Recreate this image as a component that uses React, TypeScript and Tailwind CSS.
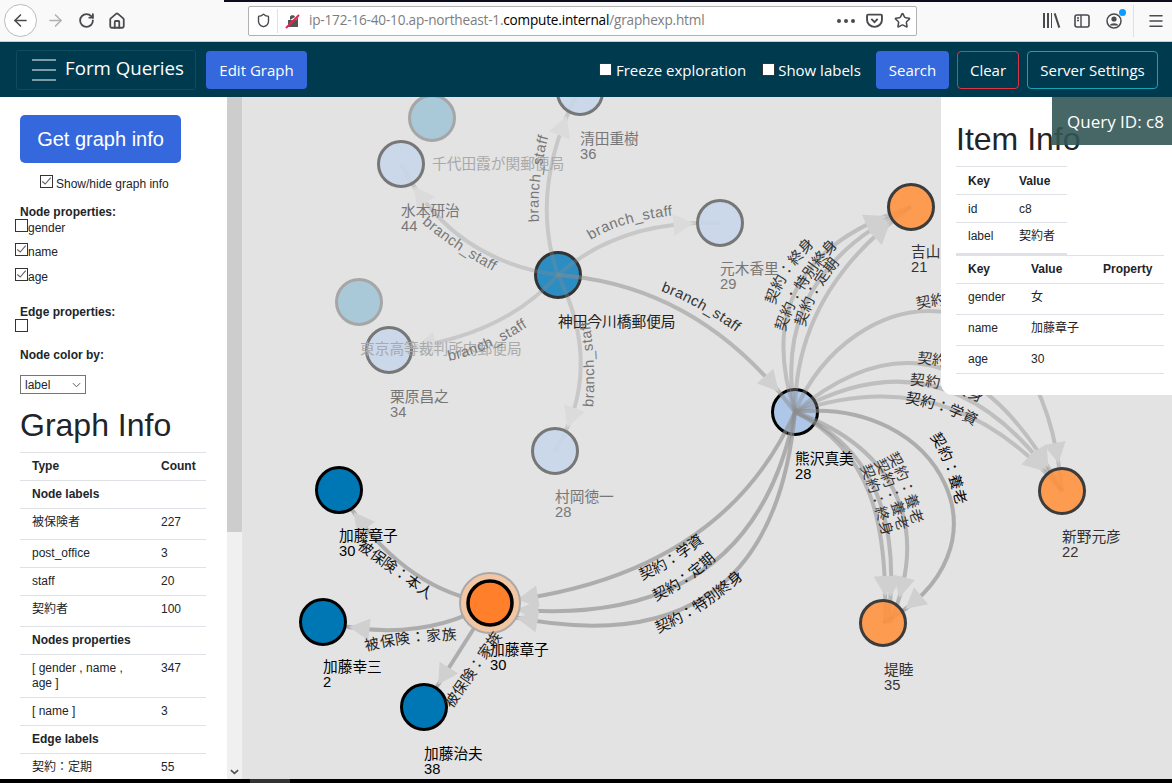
import { ArrowLeft, ArrowRight, House, Menu, RotateCw, Shield, Star } from "lucide-react";

type Pt = [number, number];

const strong = 0.62;
const mid = 0.42;
const faint = 0.3;

// edges run source -> target, last point is the target node centre
const edges: { p: Pt[]; o: number }[] = [
  { p: [[558, 275], [528, 190], [578, 92]], o: faint },
  { p: [[558, 275], [450, 260], [401, 164]], o: faint },
  { p: [[558, 275], [620, 220], [720, 223]], o: faint },
  { p: [[558, 275], [500, 340], [389, 350]], o: faint },
  { p: [[558, 275], [605, 370], [555, 451]], o: faint },
  { p: [[558, 275], [700, 285], [795, 412]], o: 0.5 },
  { p: [[795, 412], [745, 260], [911, 207]], o: mid },
  { p: [[795, 412], [770, 275], [911, 207]], o: mid },
  { p: [[795, 412], [795, 290], [911, 207]], o: mid },
  { p: [[795, 412], [850, 280], [1040, 250], [1062, 491]], o: mid },
  { p: [[795, 412], [950, 284], [1062, 491]], o: mid },
  { p: [[795, 412], [950, 324], [1062, 491]], o: mid },
  { p: [[795, 412], [950, 358], [1062, 491]], o: mid },
  { p: [[795, 412], [870, 450], [888, 520], [885, 623]], o: 0.5 },
  { p: [[795, 412], [880, 450], [900, 530], [888, 623]], o: 0.5 },
  { p: [[795, 412], [900, 450], [930, 530], [890, 623]], o: 0.5 },
  { p: [[795, 412], [940, 395], [1020, 550], [883, 623]], o: strong },
  { p: [[795, 412], [720, 580], [490, 603]], o: strong },
  { p: [[795, 412], [750, 640], [490, 607]], o: strong },
  { p: [[795, 412], [770, 680], [490, 612]], o: strong },
  { p: [[490, 603], [400, 590], [339, 490]], o: strong },
  { p: [[490, 603], [420, 645], [323, 622]], o: strong },
  { p: [[490, 603], [460, 650], [424, 707]], o: strong },
];

const edgePath = (p: Pt[]) =>
  `M${p[0][0]} ${p[0][1]} ${p.length === 3 ? "Q" : "C"}${p.slice(1).map((q) => q.join(" ")).join(" ")}`;

const pointAt = (p: Pt[], t: number): Pt => {
  let pts = p;
  while (pts.length > 1) {
    pts = pts.slice(1).map((q, i) => [pts[i][0] + (q[0] - pts[i][0]) * t, pts[i][1] + (q[1] - pts[i][1]) * t] as Pt);
  }
  return pts[0];
};

// arrow head sits just outside the target node
const arrowHead = (p: Pt[]) => {
  const end = p[p.length - 1];
  let t = 1;
  while (t > 0 && Math.hypot(pointAt(p, t)[0] - end[0], pointAt(p, t)[1] - end[1]) < 26) t -= 0.004;
  const tip = pointAt(p, t);
  let s = t;
  while (s > 0 && Math.hypot(pointAt(p, s)[0] - tip[0], pointAt(p, s)[1] - tip[1]) < 20) s -= 0.004;
  const back = pointAt(p, s);
  const dx = tip[0] - back[0];
  const dy = tip[1] - back[1];
  const k = 11 / Math.hypot(dx, dy);
  return `${tip[0]},${tip[1]} ${back[0] - dy * k},${back[1] + dx * k} ${back[0] + dy * k},${back[1] - dx * k}`;
};

const edgeLabels: { d: string; t: string; c: string; ls?: number }[] = [
  { d: "M422 223 Q455 252 510 280", t: "branch_staff", c: "#777", ls: 0.5 },
  { d: "M539 222 Q536 175 552 125", t: "branch_staff", c: "#777", ls: 0.5 },
  { d: "M591 240 Q625 218 690 214", t: "branch_staff", c: "#777", ls: 0.5 },
  { d: "M449 361 Q495 351 540 318", t: "branch_staff", c: "#777", ls: 0.5 },
  { d: "M593 407 Q597 365 588 310", t: "branch_staff", c: "#777", ls: 0.5 },
  { d: "M661 291 Q700 305 750 342", t: "branch_staff", c: "#333", ls: 0.5 },
  { d: "M775 305 Q785 270 825 235", t: "契約：終身", c: "#333" },
  { d: "M785 332 Q800 280 852 232", t: "契約：特別終身", c: "#333" },
  { d: "M805 327 Q815 285 856 246", t: "契約：定期", c: "#333" },
  { d: "M917 309 Q960 300 1010 300", t: "契約：終身", c: "#333" },
  { d: "M917 363 L1010 372", t: "契約：定期", c: "#333" },
  { d: "M910 385 Q950 385 1000 412", t: "契約：終身", c: "#333" },
  { d: "M905 403 Q945 408 990 434", t: "契約：学資", c: "#222" },
  { d: "M930 437 Q950 465 960 525", t: "契約：養老", c: "#000" },
  { d: "M887 456 Q905 485 917 543", t: "契約：養老", c: "#333" },
  { d: "M874 462 Q892 495 902 550", t: "契約：養老", c: "#333" },
  { d: "M860 467 Q875 500 887 555", t: "契約：終身", c: "#333" },
  { d: "M642 580 Q680 565 722 526", t: "契約：学資", c: "#111" },
  { d: "M656 601 Q692 585 736 540", t: "契約：定期", c: "#111" },
  { d: "M658 633 Q710 612 762 560", t: "契約：特別終身", c: "#111" },
  { d: "M357 548 Q390 572 445 612", t: "被保険：本人", c: "#111" },
  { d: "M366 651 Q410 640 475 639", t: "被保険：家族", c: "#222", ls: 0.7 },
  { d: "M452 709 L512 622", t: "被保険：家族", c: "#222" },
];

const nodes: {
  x: number;
  y: number;
  fill: string;
  stroke: string;
  name: string;
  age?: string;
  text: string;
  lx: number;
  ly: number;
  hub?: boolean;
  solid?: boolean;
}[] = [
  { x: 580, y: 92, fill: "#c6d6e9", stroke: "#777", name: "清田重樹", age: "36", text: "#777", lx: 580, ly: 144 },
  { x: 432, y: 118, fill: "#a9c9d8", stroke: "#a6a6a6", name: "千代田霞が関郵便局", text: "#a9a9a9", lx: 432, ly: 169, solid: true },
  { x: 401, y: 164, fill: "#c6d6e9", stroke: "#777", name: "水本研治", age: "44", text: "#777", lx: 401, ly: 216 },
  { x: 558, y: 275, fill: "#2c8dc2", stroke: "#333", name: "神田今川橋郵便局", text: "#222", lx: 558, ly: 327, hub: true },
  { x: 359, y: 302, fill: "#a9c9d8", stroke: "#a6a6a6", name: "東京高等裁判所内郵便局", text: "#a9a9a9", lx: 360, ly: 354, solid: true },
  { x: 389, y: 350, fill: "#c6d6e9", stroke: "#777", name: "栗原昌之", age: "34", text: "#777", lx: 390, ly: 402 },
  { x: 555, y: 451, fill: "#c6d6e9", stroke: "#777", name: "村岡徳一", age: "28", text: "#777", lx: 555, ly: 502 },
  { x: 720, y: 223, fill: "#c6d6e9", stroke: "#777", name: "元木香里", age: "29", text: "#777", lx: 720, ly: 274 },
  { x: 911, y: 207, fill: "#ff9340", stroke: "#3c3c3c", name: "吉山康子", age: "21", text: "#333", lx: 911, ly: 257 },
  { x: 795, y: 412, fill: "#aec7e8", stroke: "#000", name: "熊沢真美", age: "28", text: "#000", lx: 795, ly: 464, hub: true },
  { x: 1062, y: 491, fill: "#ff9340", stroke: "#3c3c3c", name: "新野元彦", age: "22", text: "#333", lx: 1062, ly: 542 },
  { x: 883, y: 623, fill: "#ff9340", stroke: "#3c3c3c", name: "堤睦", age: "35", text: "#333", lx: 884, ly: 675 },
  { x: 339, y: 490, fill: "#0077b5", stroke: "#000", name: "加藤章子", age: "30", text: "#000", lx: 339, ly: 541, solid: true },
  { x: 323, y: 622, fill: "#0077b5", stroke: "#000", name: "加藤幸三", age: "2", text: "#000", lx: 323, ly: 672, solid: true },
  { x: 424, y: 707, fill: "#0077b5", stroke: "#000", name: "加藤治夫", age: "38", text: "#000", lx: 424, ly: 759, solid: true },
];

const graphRows: { a: string; b?: string; bold?: boolean; cls: string }[] = [
  { a: "Type", b: "Count", bold: true, cls: "h-[28px]" },
  { a: "Node labels", bold: true, cls: "h-[28px]" },
  { a: "被保険者", b: "227", cls: "h-[31px]" },
  { a: "post_office", b: "3", cls: "h-[28px]" },
  { a: "staff", b: "20", cls: "h-[28px]" },
  { a: "契約者", b: "100", cls: "h-[31px]" },
  { a: "Nodes properties", bold: true, cls: "h-[28px]" },
  { a: "[ gender , name , age ]", b: "347", cls: "h-[43px]" },
  { a: "[ name ]", b: "3", cls: "h-[28px]" },
  { a: "Edge labels", bold: true, cls: "h-[28px]" },
  { a: "契約：定期", b: "55", cls: "h-[31px]" },
];

function Tick() {
  return (
    <svg viewBox="0 0 13 13" className="absolute inset-0 w-full h-full">
      <path d="M1.5 6.5 L5 9.5 L11.5 2" fill="none" stroke="#666" strokeWidth="1.4" />
    </svg>
  );
}

function Box({ on, cls }: { on?: boolean; cls?: string }) {
  return (
    <span className={`relative block shrink-0 w-[13px] h-[13px] border border-[#333] bg-white ${cls ?? ""}`}>
      {on && <Tick />}
    </span>
  );
}

function PropRow({ label, on, cls }: { label: string; on?: boolean; cls: string }) {
  return (
    <div className={`flex items-start pl-[15px] ${cls}`}>
      <Box on={on} />
      <span className="text-[12px] leading-[14px] mt-[2px]">{label}</span>
    </div>
  );
}

function BrowserBar() {
  return (
    <div className="relative h-[42px] shrink-0 bg-[#f9f9fa] border-b border-[#ccc] flex items-center text-[#4a4a4f]">
      <div className="absolute top-0 left-[224px] right-0 h-[2px] bg-[#0c0c1d]" />
      <div className="ml-[4px] w-[33px] h-[33px] rounded-full border border-[#bbb] bg-white flex items-center justify-center">
        <ArrowLeft size={19} strokeWidth={2} />
      </div>
      <ArrowRight size={19} strokeWidth={2} className="ml-[9px] text-[#b1b1b3]" />
      <RotateCw size={17} strokeWidth={2.6} className="ml-[13px]" />
      <House size={18} strokeWidth={2.4} className="ml-[13px]" />
      <div className="ml-[122px] w-[669px] h-[30px] bg-white border border-[#b1b1b3] rounded-[2px] flex items-center">
        <Shield size={15} strokeWidth={2.2} className="ml-[7px]" />
        <div className="ml-[6px] w-px h-[24px] bg-[#e2e2e2]" />
        <svg viewBox="0 0 16 16" className="ml-[7px] w-[16px] h-[16px]">
          <path d="M3 14 V7 H11 L13 4 V14 Z M5 7 V4 C5 1.5 10 1.5 10 4" fill="#555" />
          <path d="M1 15 L14 2" stroke="#e22850" strokeWidth="2" />
        </svg>
        <span className="ml-[8px] text-[13.6px] text-[#7d7d80] whitespace-nowrap font-['Open_Sans',sans-serif] tracking-[-0.2px]">
          ip-172-16-40-10.ap-northeast-1.<span className="text-black">compute.internal</span>/graphexp.html
        </span>
        <div className="ml-auto flex items-center gap-[3px] mr-[11px]">
          <i className="w-[4px] h-[4px] rounded-full bg-[#4a4a4f]" />
          <i className="w-[4px] h-[4px] rounded-full bg-[#4a4a4f]" />
          <i className="w-[4px] h-[4px] rounded-full bg-[#4a4a4f]" />
        </div>
        <svg viewBox="0 0 16 16" className="w-[17px] h-[17px] mr-[11px]">
          <path d="M2 2.5 H14 C14.6 2.5 15 3 15 3.5 V7.5 C15 11 12 14 8 14 C4 14 1 11 1 7.5 V3.5 C1 3 1.4 2.5 2 2.5 Z M5 6.5 L8 9.5 L11 6.5" fill="none" stroke="#4a4a4f" strokeWidth="1.8" />
        </svg>
        <Star size={17} strokeWidth={2.2} className="mr-[5px]" />
      </div>
      <div className="ml-[126px] w-[15px] h-[15px] flex items-stretch gap-[2px]">
        <i className="w-[2px] bg-[#4a4a4f]" />
        <i className="w-[2px] bg-[#4a4a4f]" />
        <i className="w-[2px] bg-[#4a4a4f]" />
        <i className="w-[2px] bg-[#4a4a4f] -rotate-[18deg] ml-[2px]" />
      </div>
      <svg viewBox="0 0 16 16" className="ml-[16px] w-[16px] h-[16px]">
        <rect x="1" y="2" width="14" height="12" rx="2" fill="none" stroke="#4a4a4f" strokeWidth="1.6" />
        <path d="M7 2 V14 M3 5 H5 M3 7.5 H5" stroke="#4a4a4f" strokeWidth="1.4" />
      </svg>
      <div className="relative ml-[16px] w-[16px] h-[16px]">
        <svg viewBox="0 0 16 16" className="w-[16px] h-[16px]">
          <circle cx="8" cy="8" r="7" fill="none" stroke="#4a4a4f" strokeWidth="1.5" />
          <circle cx="8" cy="6" r="2.6" fill="#4a4a4f" />
          <path d="M3.5 12.5 C5 9.5 11 9.5 12.5 12.5 Z" fill="#4a4a4f" />
        </svg>
        <i className="absolute -top-[4px] -right-[4px] w-[7px] h-[7px] rounded-full bg-[#0a9dff]" />
      </div>
      <div className="ml-[11px] w-px h-[32px] bg-[#e0e0e1]" />
      <Menu size={18} strokeWidth={2} className="ml-[13px]" />
    </div>
  );
}

function NavBar() {
  return (
    <div className="h-[55px] shrink-0 bg-[#003a4f] flex items-center text-white font-['Open_Sans',sans-serif]">
      <div className="ml-[16px] w-[180px] h-[40px] border border-[#0e4c5f] rounded-[3px] flex items-center">
        <div className="ml-[15px] w-[24px] flex flex-col gap-[8px]">
          <i className="h-[2px] bg-[#7f9ca6]" />
          <i className="h-[2px] bg-[#7f9ca6]" />
          <i className="h-[2px] bg-[#7f9ca6]" />
        </div>
        <span className="ml-[9px] text-[18.7px] leading-none -mt-[2px]">Form Queries</span>
      </div>
      <div className="ml-[10px] w-[101px] h-[38px] pt-[2px] rounded-[4px] bg-[#3468dc] text-[15px] flex items-center justify-center">Edit Graph</div>
      <span className="ml-[292px] w-[13px] h-[13px] bg-white border border-[#333]" />
      <span className="ml-[4px] pt-[2px] text-[15px] whitespace-nowrap">Freeze exploration</span>
      <span className="ml-[16px] w-[13px] h-[13px] bg-white border border-[#333]" />
      <span className="ml-[3px] pt-[2px] text-[15px] whitespace-nowrap">Show labels</span>
      <div className="ml-auto flex items-center">
        <div className="w-[73px] h-[38px] pt-[2px] rounded-[4px] bg-[#3468dc] text-[15px] flex items-center justify-center">Search</div>
        <div className="ml-[8px] w-[62px] h-[38px] pt-[2px] rounded-[4px] border border-[#dc3545] text-[15px] flex items-center justify-center">Clear</div>
        <div className="ml-[8px] mr-[14px] w-[131px] h-[38px] pt-[2px] rounded-[4px] border border-[#17a2b8] text-[15px] flex items-center justify-center">Server Settings</div>
      </div>
    </div>
  );
}

function Sidebar() {
  return (
    <div className="w-[227px] shrink-0 bg-white overflow-hidden text-[#212529] font-['Liberation_Sans','Noto_Sans_CJK_JP',sans-serif]">
      <div className="ml-[20px] mt-[18px] w-[161px] h-[48px] rounded-[5px] bg-[#3468dc] text-white text-[20px] flex items-center justify-center">
        Get graph info
      </div>
      <div className="flex items-center ml-[40px] mt-[12px] h-[13px]">
        <Box on />
        <span className="ml-[3px] text-[12px] leading-[14px] mt-[5px]">Show/hide graph info</span>
      </div>
      <div className="ml-[20px] mt-[17px] text-[12px] leading-[14px] font-bold">Node properties:</div>
      <PropRow label="gender" cls="mt-0" />
      <PropRow label="name" on cls="mt-[8px]" />
      <PropRow label="age" on cls="mt-[9px]" />
      <div className="ml-[20px] mt-[21px] text-[12px] leading-[14px] font-bold">Edge properties:</div>
      <div className="pl-[15px]">
        <Box />
      </div>
      <div className="ml-[20px] mt-[16px] text-[12px] leading-[14px] font-bold">Node color by:</div>
      <div className="ml-[20px] mt-[13px] w-[66px] h-[19px] border border-[#767676] flex items-center pl-[4px] pr-[4px] text-[12px]">
        label
        <svg viewBox="0 0 10 6" className="ml-auto w-[9px] h-[6px]">
          <path d="M1 1 L5 5 L9 1" fill="none" stroke="#555" strokeWidth="1.1" />
        </svg>
      </div>
      <h2 className="ml-[20px] mt-[12px] text-[32px] leading-[38px]">Graph Info</h2>
      <table className="ml-[20px] mt-[8px] w-[186px] table-fixed border-collapse text-[12px] leading-[15px]">
        <tbody>
          {graphRows.map((r, i) => (
            <tr key={i} className={`${r.cls} border-t border-[#dee2e6]`}>
              <td className={`w-[141px] pl-[12px] pr-[24px] py-[6px] align-top ${r.bold ? "font-bold" : ""}`}>{r.a}</td>
              <td className={`pl-0 pr-[2px] py-[6px] align-top ${r.bold ? "font-bold" : ""}`}>{r.b}</td>
            </tr>
          ))}
        </tbody>
      </table>
    </div>
  );
}

function ScrollBar() {
  return (
    <div className="w-[16px] shrink-0 bg-[#f0f0f0] flex flex-col border-r border-[#e6e6e6]">
      <div className="h-[435px] w-[15px] bg-[#cdcdcd]" />
      <svg viewBox="0 0 10 6" className="mt-auto mb-[4px] ml-[3px] w-[9px] h-[6px]">
        <path d="M1 1 L5 4.5 L9 1" fill="none" stroke="#505050" strokeWidth="1.8" />
      </svg>
    </div>
  );
}

function Graph() {
  const circle = (n: (typeof nodes)[number]) => (
    <circle key={n.name} cx={n.x} cy={n.y} r={22.5} fill={n.fill} fillOpacity={n.hub || n.solid ? 1 : 0.9} stroke={n.stroke} strokeWidth={3} />
  );
  return (
    <div className="relative flex-1 min-w-0 overflow-hidden bg-[#e3e3e3]">
      <svg viewBox="243 97 929 682" className="block w-full h-full" style={{ fontFamily: "'Liberation Sans','Noto Sans CJK JP',sans-serif" }}>
        <defs>
          {edgeLabels.map((l, i) => (
            <path key={i} id={`lbl${i}`} d={l.d} />
          ))}
        </defs>
        {nodes.filter((n) => n.hub).map(circle)}
        {edges.map((e, i) => (
          <path key={i} d={edgePath(e.p)} fill="none" stroke="#8c8c8c" strokeWidth={4} opacity={e.o} />
        ))}
        {edges.map((e, i) => (
          <polygon key={i} points={arrowHead(e.p)} fill={e.o === faint ? "#dbdbdb" : "#d0d0d0"} />
        ))}
        {nodes.filter((n) => !n.hub).map(circle)}
        <circle cx={490} cy={603} r={30} fill="#f2c6a3" stroke="#a9a9a9" strokeWidth={2} />
        <circle cx={490} cy={603} r={22} fill="#ff7f2a" stroke="#000" strokeWidth={3.5} />
        {nodes.map((n) => (
          <text key={n.name} x={n.lx} y={n.ly} fill={n.text} fontSize={14.7}>
            {n.name}
            {n.age && (
              <tspan x={n.lx} dy={15}>
                {n.age}
              </tspan>
            )}
          </text>
        ))}
        <text x={490} y={655} fill="#000" fontSize={14.7}>
          加藤章子
          <tspan x={490} dy={15}>
            30
          </tspan>
        </text>
        {edgeLabels.map((l, i) => (
          <text key={i} fontSize={14.7} fill={l.c} letterSpacing={l.ls}>
            <textPath href={`#lbl${i}`}>{l.t}</textPath>
          </text>
        ))}
      </svg>

      <div className="absolute top-0 right-0 w-[231px] h-[298px] bg-white rounded-bl-[12px] pl-[15px] pr-[8px] text-[#212529] font-['Liberation_Sans','Noto_Sans_CJK_JP',sans-serif]">
        <h2 className="mt-0 pt-[23px] text-[32px] leading-[38px] whitespace-nowrap">Item Info</h2>
        <table className="mt-[8px] w-[111px] table-fixed border-collapse text-[12px] leading-[15px]">
          <tbody>
            <tr className="h-[28px] border-t border-[#dee2e6] font-bold">
              <td className="w-[63px] pl-[12px] pt-[7px] pb-[5px]">Key</td>
              <td className="pt-[7px] pb-[5px]">Value</td>
            </tr>
            <tr className="h-[28px] border-t border-[#dee2e6]">
              <td className="pl-[12px] pt-[7px] pb-[5px]">id</td>
              <td className="pt-[7px] pb-[5px]">c8</td>
            </tr>
            <tr className="h-[31px] border-t border-b-2 border-[#dee2e6]">
              <td className="pl-[12px] py-[6px] align-top">label</td>
              <td className="py-[6px] align-top">契約者</td>
            </tr>
          </tbody>
        </table>
        <table className="w-[208px] table-fixed border-collapse text-[12px] leading-[15px]">
          <tbody>
            <tr className="h-[28px] border-t border-[#dee2e6] font-bold">
              <td className="w-[75px] pl-[12px] py-[6px]">Key</td>
              <td className="w-[72px] py-[6px]">Value</td>
              <td className="py-[6px]">Property</td>
            </tr>
            <tr className="h-[31px] border-t border-[#dee2e6]">
              <td className="pl-[12px] py-[6px] align-top">gender</td>
              <td className="py-[6px] align-top">女</td>
              <td />
            </tr>
            <tr className="h-[31px] border-t border-[#dee2e6]">
              <td className="pl-[12px] py-[6px] align-top">name</td>
              <td className="py-[6px] align-top">加藤章子</td>
              <td />
            </tr>
            <tr className="h-[28px] border-t border-b border-[#dee2e6]">
              <td className="pl-[12px] py-[6px]">age</td>
              <td className="py-[6px]">30</td>
              <td />
            </tr>
          </tbody>
        </table>
      </div>

      <div className="absolute top-0 right-0 w-[120px] h-[48px] pl-[15px] pt-[2px] bg-[#335555]/90 text-white text-[17px] flex items-center font-['Open_Sans',sans-serif] whitespace-nowrap">
        Query ID: c8
      </div>
    </div>
  );
}

export default function App() {
  return (
    <div className="w-[1172px] h-[783px] overflow-hidden flex flex-col bg-black">
      <BrowserBar />
      <NavBar />
      <div className="h-[682px] shrink-0 flex">
        <Sidebar />
        <ScrollBar />
        <Graph />
      </div>
      <div className="flex-1 min-h-0 flex">
        <div className="ml-[250px] w-[40px] bg-[#333]" />
      </div>
    </div>
  );
}
